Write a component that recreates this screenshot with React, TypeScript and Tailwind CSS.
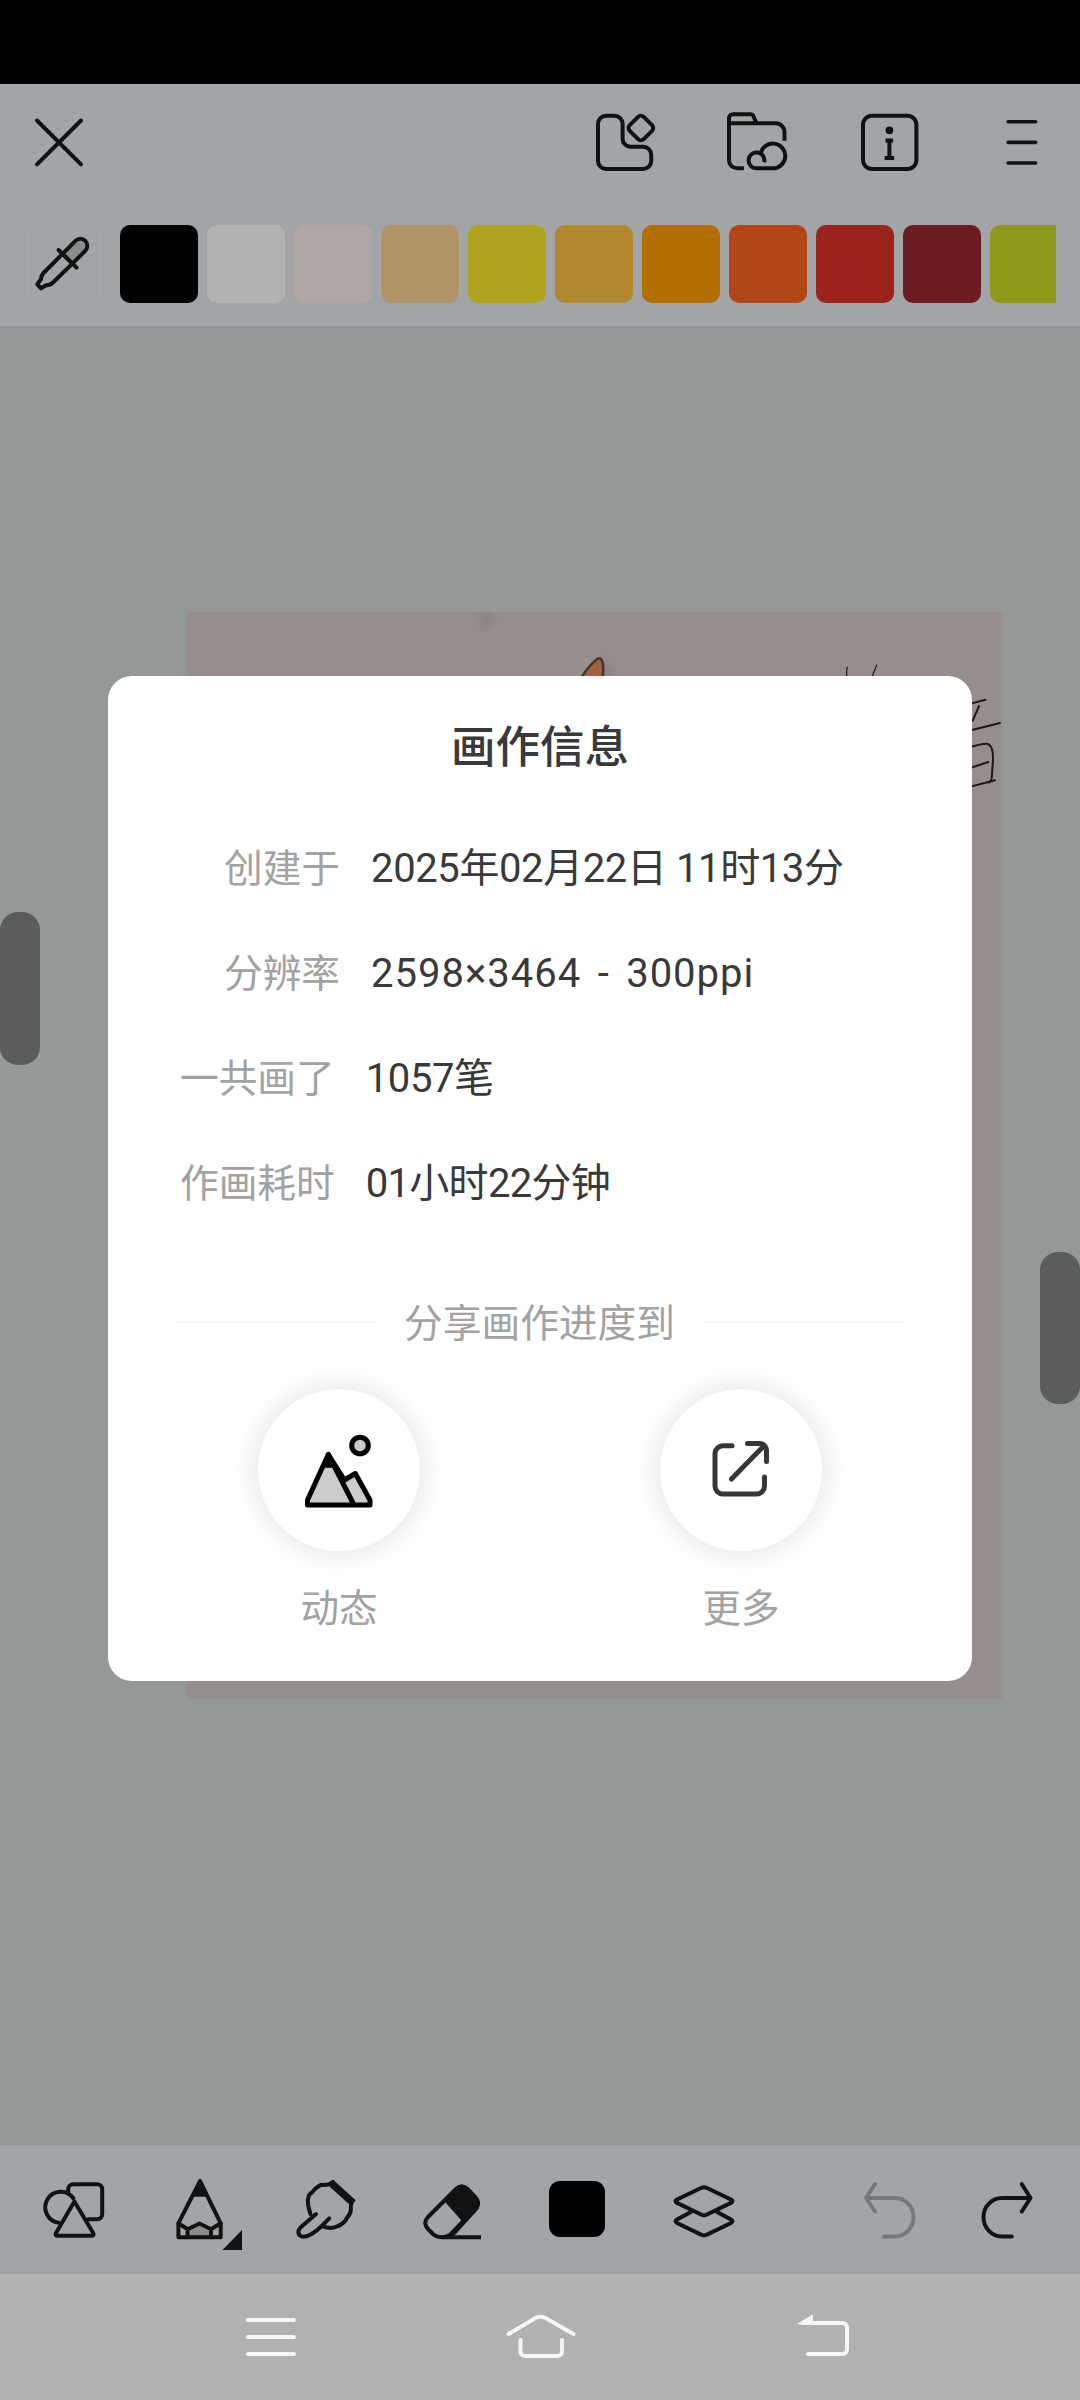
import type { ReactNode } from 'react';
import clsx from 'clsx';

const swatches = [
  'bg-black',
  'bg-[#b2b2b2]',
  'bg-[#b0a7a4]',
  'bg-[#b19468]',
  'bg-[#b0a31f]',
  'bg-[#b1882d]',
  'bg-[#b26e00]',
  'bg-[#b24616]',
  'bg-[#9b231b]',
  'bg-[#6c1b23]',
  'bg-[#8f9a1a]'
];

const details = [
  { label: '创建于', value: '2025年02月22日 11时13分', indent: 'pl-[116px]', tracking: 'tracking-[-0.4px]' },
  { label: '分辨率', value: '2598×3464 - 300ppi', indent: 'pl-[116px]', tracking: 'tracking-[1px] [word-spacing:5.5px]' },
  { label: '一共画了', value: '1057笔', indent: 'pl-[72px]', tracking: 'tracking-[-0.4px]' },
  { label: '作画耗时', value: '01小时22分钟', indent: 'pl-[72px]', tracking: 'tracking-[-0.7px]' }
];

interface IconProps {
  size?: number;
  width?: number;
  color?: string;
  className?: string;
  children: ReactNode;
}

function Icon({ size = 72, width = 4, color = '#121212', className, children }: IconProps) {
  return (
    <svg
      width={size}
      height={size}
      viewBox={`0 0 ${size} ${size}`}
      fill="none"
      stroke={color}
      strokeWidth={width}
      strokeLinecap="round"
      strokeLinejoin="round"
      className={clsx('shrink-0 overflow-visible', className)}
    >
      {children}
    </svg>
  );
}

function Header() {
  return (
    <div className="flex h-[116px] justify-between pt-6 pl-[25px] pr-[30px]">
      <Icon size={68}>
        <path d="M12 12.5L56 56.3M56 12.5L12 56.3" />
      </Icon>
      <div className="flex gap-[62px]">
        <Icon size={68}>
          <path d="M14 7.7h8.6a8 8 0 0 1 8 8v15a8 8 0 0 0 8 8h12.6a8 8 0 0 1 8 8V53a8 8 0 0 1-8 8H14a8 8 0 0 1-8-8V15.7a8 8 0 0 1 8-8z" />
          <rect x="39" y="10.1" width="19.8" height="19.8" rx="4" transform="rotate(45 48.9 20)" />
        </Icon>
        <Icon size={68}>
          <path strokeLinecap="butt" d="M21.9 60.3H15a8 8 0 0 1-8-8V10.3a4 4 0 0 1 4-4h18q1.5 0 2.2 1.4L34.5 15M7 15.3h46.5a9 9 0 0 1 9 9v8.4" />
          <path strokeLinecap="butt" d="M42.2 54.2A7.9 7.9 0 1 0 34.5 60.3H51A12.4 12.4 0 1 0 38.8 45" />
        </Icon>
        <Icon size={68}>
          <rect x="11" y="7.7" width="53.4" height="53.3" rx="9" />
          <circle cx="37.4" cy="22.3" r="3.9" fill="#121212" stroke="none" />
          <path strokeLinecap="butt" d="M33.5 32.5h7.6M37.4 31v19M32.6 50h9.6" />
        </Icon>
        <Icon size={68} width={3.6}>
          <path d="M26.2 13.7h27.4M26.2 34.4h27.4M26.2 55h27.4" />
        </Icon>
      </div>
    </div>
  );
}

function Palette() {
  return (
    <div className="flex h-[126px] pt-[25px] pl-[26px] pr-6">
      <div className="h-[78px] w-[76px] shrink-0 rounded-lg border-2 border-[#a4a8aa]">
        <Icon size={76} className="-mt-0.5 -ml-[3px]">
          <path fill="#898b8c" d="M37.6 28.8L50.4 15.9a7 7 0 0 1 9.9 9.9L47.4 38.6z" />
          <path d="M33.6 25L51.5 42.7M37.6 28.8L18.5 48Q16.5 50 16 54L12.3 59.3L16 63.4L20.5 60.5Q25.6 59.8 27.5 58L47.4 38.6" />
        </Icon>
      </div>
      <div className="ml-[18px] flex flex-1 gap-[9px] overflow-hidden">
        {swatches.map((color) => (
          <div key={color} className={clsx('h-[78px] w-[78px] shrink-0 rounded-[10px]', color)} />
        ))}
      </div>
    </div>
  );
}

function Artboard() {
  return (
    <div className="relative h-[1819px] overflow-hidden bg-[#949896]">
      <div className="absolute top-[286px] left-[187px] h-[1087px] w-[815px] bg-[#988d8d]">
        <svg width="815" height="1086" viewBox="0 0 815 1086" fill="none" stroke="#1d1718" strokeWidth="2" strokeLinecap="round">
          <circle cx="299" cy="7" r="7" fill="#888082" stroke="none" className="blur-[4px]" />
          <path d="M414 42l14 24h-14z" fill="#858084" stroke="none" className="blur-[4px]" />
          <path d="M394 66Q403 52 411 46.5Q414 45 415.5 50Q417 57 415.5 66z" fill="#a3603f" stroke="#44332f" strokeWidth="2.5" />
          <path strokeWidth="1.2" d="M660.3 55Q659 60 659.7 65M689.7 53L685 65" />
          <path d="M780 92.6L798.3 87.7M792 94L785.7 108.7M780 119.3L813 111" />
          <path d="M780 136.3Q796 131 801 132Q806.5 134.5 806 148L804.7 166.3Q803.5 171.5 800.7 170.3" />
          <path d="M780 157L801.3 150M780 175.6L808 168.3" />
        </svg>
      </div>
      <div className="absolute top-[586px] left-0 h-[153px] w-10 rounded-[18px] bg-[#5a5d5b] ring-1 ring-[#999b9a]" />
      <div className="absolute top-[926px] right-0 h-[152px] w-10 rounded-[18px] bg-[#5a5d5b] ring-1 ring-[#999b9a]" />
    </div>
  );
}

function Toolbar() {
  return (
    <div className="flex h-[129px] bg-[#a1a5a7] pt-[30px] pl-[38px]">
      <Icon>
        <path d="M35.5 23.5A15.5 15.5 0 1 0 20.8 47.7" />
        <path d="M30.2 17V14.3a5 5 0 0 1 5-5h24a5 5 0 0 1 5 5v25a5 5 0 0 1-5 5H50" />
        <path d="M36.4 26.5L18 58Q16.8 60.7 19.2 60.7H54Q56.4 60.7 55.2 58z" />
      </Icon>
      <Icon className="ml-[60px]">
        <path d="M17.5 54.3L29.5 48.5L41 54.3V62.3H17.5z" fill="#8a8c8d" stroke="none" />
        <path d="M30 6L8.4 48.3V62.3H50.7V48.3z" />
        <path d="M8.4 48.3L17.7 54.3L29.5 48.5L41 54.3L50.7 48.3M17.5 54.3v8M41 54.3v8" />
        <path d="M30 5L22.5 21.7H37.5z" fill="#121212" stroke="none" />
        <path d="M72 55V75H52.5z" fill="#121212" stroke="none" />
      </Icon>
      <Icon className="ml-12">
        <path d="M26 39L10.5 52.5Q6.5 57 10 60.5Q14 63.5 21.6 59Q27 56 31 51.7L39.3 43.3" />
        <path d="M20.5 39Q16.5 27 18.5 22Q19 19 22 17.5Q26 12 31 9.8Q36 10.3 40 8.8L43 7M62 26Q60.5 30 60.8 35Q60.5 39 57.5 42Q54 49 48 51Q42 54.5 33 51.5" />
        <path d="M44.5 11L60.500 25.500" strokeWidth="7.500" strokeLinecap="square" />
      </Icon>
      <Icon className="ml-14">
        <path d="M27.2 25L37.5 13.5Q43.4 8 50 13.5L58 22Q64 28 59 34L45.2 46z" fill="#121212" stroke="none" />
        <path d="M27.5 24.5L38.5 13.5Q43.5 9 49 13.5L58 23Q62 28 58.5 33.500L34 60.500M27.5 24.5L10 42Q4.5 48 10 54L15.5 59.500Q19 62.300 24.5 62.300Q29 62 32 60L46 45.500z" />
        <path strokeLinecap="butt" d="M24.5 62.3H63" />
      </Icon>
      <div className="mt-1.5 ml-[59px] h-14 w-14 rounded-[11px] bg-black" />
      <Icon className="ml-[63px]">
        <path d="M33 13q3-1.6 6 0L63 24.5q3 1.7 0 3.4L39 39.5q-3 1.6-6 0L9 27.9q-3-1.7 0-3.4z" />
        <path d="M23 37L9 44.6q-3 1.7 0 3.4L33 59.6q3 1.6 6 0L63 48q3-1.7 0-3.4L49 37" />
      </Icon>
      <Icon className="ml-[120px]" color="#777979">
        <path d="M15 9.2L6.2 23L15 36.5M6.2 23H35a18.5 19.2 0 0 1 0 38.4H24" />
      </Icon>
      <Icon className="ml-[42px]">
        <path d="M47.8 9.2L56.5 23L47.8 36.5M56.5 23H28a18.5 19.2 0 0 0 0 38.4h9.8" />
      </Icon>
    </div>
  );
}

function SystemNav() {
  return (
    <div className="flex h-[126px] bg-[#b1b1b1] pt-[26px] pl-[231px]">
      <Icon size={80} color="#f5f5f5">
        <path d="M17 20h46M17 37h46M17 54h46" />
      </Icon>
      <Icon size={80} color="#f5f5f5" className="ml-[189px]">
        <path d="M8.5 34L36 17.8Q40.5 15.5 45 17.8L73.5 34M20.5 40V51Q20.5 56 25.5 56H57Q62 56 62 51V40" />
      </Icon>
      <Icon size={80} color="#f5f5f5" className="ml-[210px]">
        <path d="M12 23H52Q57 23 57 28V49Q57 54 52 54H18" />
        <path d="M8.5 23.5L22.5 15v8.5z" fill="#f5f5f5" strokeWidth="1" />
      </Icon>
    </div>
  );
}

function ShareButton({ label, children }: { label: string; children: ReactNode }) {
  return (
    <div className="flex w-[162px] flex-col items-center">
      <div className="flex h-[162px] w-[162px] items-center justify-center rounded-full bg-white shadow-[0_0_32px_rgba(0,0,0,0.13)]">
        {children}
      </div>
      <span className="mt-9 text-[38.5px] leading-[44px] text-[#a2a2a2]">{label}</span>
    </div>
  );
}

function InfoDialog() {
  return (
    <div className="h-[1005px] w-[864px] rounded-3xl bg-white">
      <h2 className="pt-[46px] text-center text-[44.5px] leading-[52px] font-medium text-[#393939]">画作信息</h2>

      <div className="mt-[42px]">
        {details.map(({ label, value, indent, tracking }) => (
          <div key={label} className={clsx('flex h-[105px] items-center leading-[52px] whitespace-nowrap', indent)}>
            <span className="text-[38.7px] text-[#a2a2a2]">{label}</span>
            <span className={clsx('ml-[31px] text-[40px] text-[#393939]', tracking)}>{value}</span>
          </div>
        ))}
      </div>

      {/* Share progress */}
      <div className="mt-[60px] flex h-[52px] items-center px-[68px]">
        <div className="h-px w-[198px] bg-[#f0f0f0]" />
        <span className="flex-1 pt-1 text-center text-[38.7px] leading-[52px] whitespace-nowrap text-[#a2a2a2]">分享画作进度到</span>
        <div className="h-px w-[199px] bg-[#f0f0f0]" />
      </div>
      <div className="mt-[41px] flex justify-between px-[150px]">
        <ShareButton label="动态">
          <Icon size={80} width={5} color="#000">
            <path d="M29.3 24.5L8.5 70V75H71V70L56.3 43.5L45.5 50z" fill="#ccc" />
            <path d="M29.3 24.5L54.5 74" />
            <path d="M29.3 24L23 37.7H35.6z" fill="#000" stroke="none" />
            <circle cx="61" cy="15.5" r="8.3" fill="#ccc" />
          </Icon>
        </ShareButton>
        <ShareButton label="更多">
          <Icon size={80} width={5} color="#363636">
            <path d="M31 15.7H22a8 8 0 0 0-8 8V56a8 8 0 0 0 8 8H55.5a8 8 0 0 0 8-8V47" />
            <path d="M46.5 13.5H58.5a7 7 0 0 1 7 7V31.5M30.5 49L63 15.8" />
          </Icon>
        </ShareButton>
      </div>
    </div>
  );
}

export default function App() {
  return (
    <div className="relative h-[2400px] w-[1080px] overflow-hidden bg-[#a1a5a7] font-['Roboto','Noto_Sans_CJK_SC',sans-serif]">
      <div className="h-[84px] bg-black" />
      <Header />
      <Palette />
      <Artboard />
      <Toolbar />
      <SystemNav />
      <div className="absolute inset-0 flex items-start justify-center pt-[676px]">
        <InfoDialog />
      </div>
    </div>
  );
}
